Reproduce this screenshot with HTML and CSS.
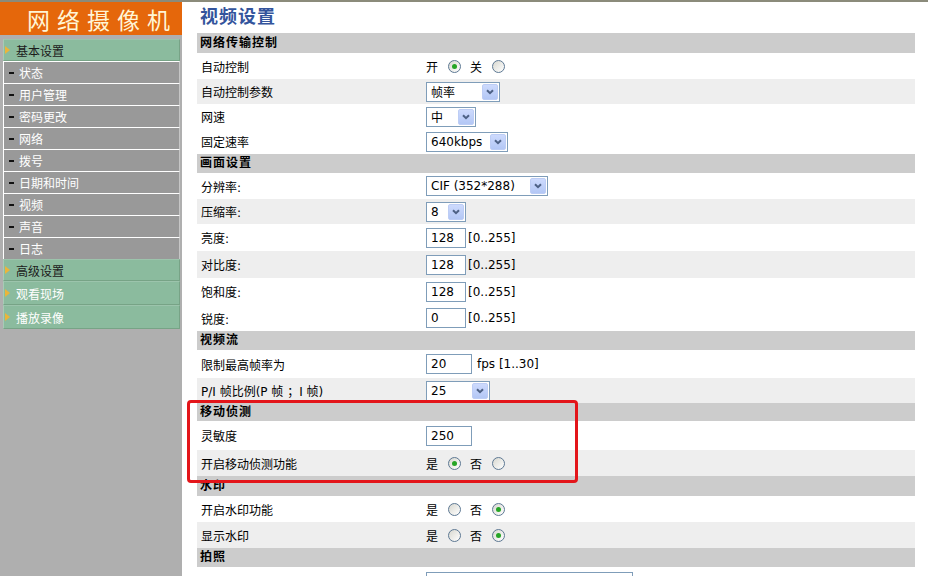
FILE: index.html
```html
<!DOCTYPE html>
<html lang="zh-CN">
<head>
<meta charset="utf-8">
<title>视频设置</title>
<link rel="stylesheet" href="styles.css">
</head>
<body>
<div class="page">
  <aside class="side">
    <div class="brand">网络摄像机</div>
    <nav class="menu">
      <div class="m-main dark"><span class="tri"></span>基本设置</div>
      <div class="m-sub"><span class="dash"></span>状态</div>
      <div class="m-sub"><span class="dash"></span>用户管理</div>
      <div class="m-sub"><span class="dash"></span>密码更改</div>
      <div class="m-sub"><span class="dash"></span>网络</div>
      <div class="m-sub"><span class="dash"></span>拨号</div>
      <div class="m-sub"><span class="dash"></span>日期和时间</div>
      <div class="m-sub"><span class="dash"></span>视频</div>
      <div class="m-sub"><span class="dash"></span>声音</div>
      <div class="m-sub"><span class="dash"></span>日志</div>
      <div class="m-main dark"><span class="tri"></span>高级设置</div>
      <div class="m-main tall"><span class="tri"></span>观看现场</div>
      <div class="m-main tall"><span class="tri"></span>播放录像</div>
    </nav>
  </aside>
  <main class="content">
    <h1 class="title">视频设置</h1>
    <div class="table">
      <div class="sec s20">网络传输控制</div>
      <div class="row r26">
        <div class="lbl">自动控制</div>
        <div class="ctl"><span>开</span><span class="rad on"></span><span>关</span><span class="rad"></span></div>
      </div>
      <div class="row alt">
        <div class="lbl">自动控制参数</div>
        <div class="ctl"><span class="sel w74"><span>帧率</span><span class="sb"><svg width="8" height="6" viewBox="0 0 8 6"><path d="M1 1.2 L4 4.2 L7 1.2" fill="none" stroke="#4d6185" stroke-width="2"/></svg></span></span></div>
      </div>
      <div class="row">
        <div class="lbl">网速</div>
        <div class="ctl"><span class="sel w50"><span>中</span><span class="sb"><svg width="8" height="6" viewBox="0 0 8 6"><path d="M1 1.2 L4 4.2 L7 1.2" fill="none" stroke="#4d6185" stroke-width="2"/></svg></span></span></div>
      </div>
      <div class="row">
        <div class="lbl">固定速率</div>
        <div class="ctl"><span class="sel w82"><span>640kbps</span><span class="sb"><svg width="8" height="6" viewBox="0 0 8 6"><path d="M1 1.2 L4 4.2 L7 1.2" fill="none" stroke="#4d6185" stroke-width="2"/></svg></span></span></div>
      </div>

      <div class="sec">画面设置</div>
      <div class="row r26">
        <div class="lbl">分辨率:</div>
        <div class="ctl"><span class="sel w122"><span>CIF (352*288)</span><span class="sb"><svg width="8" height="6" viewBox="0 0 8 6"><path d="M1 1.2 L4 4.2 L7 1.2" fill="none" stroke="#4d6185" stroke-width="2"/></svg></span></span></div>
      </div>
      <div class="row alt">
        <div class="lbl">压缩率:</div>
        <div class="ctl"><span class="sel w40"><span>8</span><span class="sb"><svg width="8" height="6" viewBox="0 0 8 6"><path d="M1 1.2 L4 4.2 L7 1.2" fill="none" stroke="#4d6185" stroke-width="2"/></svg></span></span></div>
      </div>
      <div class="row r27">
        <div class="lbl">亮度:</div>
        <div class="ctl"><input class="txt w40" value="128" readonly><span class="hint">[0..255]</span></div>
      </div>
      <div class="row r27 alt">
        <div class="lbl">对比度:</div>
        <div class="ctl"><input class="txt w40" value="128" readonly><span class="hint">[0..255]</span></div>
      </div>
      <div class="row r27">
        <div class="lbl">饱和度:</div>
        <div class="ctl"><input class="txt w40" value="128" readonly><span class="hint">[0..255]</span></div>
      </div>
      <div class="row r26">
        <div class="lbl">锐度:</div>
        <div class="ctl"><input class="txt w40" value="0" readonly><span class="hint">[0..255]</span></div>
      </div>

      <div class="sec">视频流</div>
      <div class="row r28">
        <div class="lbl">限制最高帧率为</div>
        <div class="ctl"><input class="txt w46" value="20" readonly><span class="hint fps">fps [1..30]</span></div>
      </div>
      <div class="row alt">
        <div class="lbl">P/I 帧比例(P 帧 ；I 帧)</div>
        <div class="ctl"><span class="sel w64"><span>25</span><span class="sb"><svg width="8" height="6" viewBox="0 0 8 6"><path d="M1 1.2 L4 4.2 L7 1.2" fill="none" stroke="#4d6185" stroke-width="2"/></svg></span></span></div>
      </div>

      <div class="sec s18">移动侦测</div>
      <div class="row r29">
        <div class="lbl">灵敏度</div>
        <div class="ctl"><input class="txt w46" value="250" readonly></div>
      </div>
      <div class="row r26 alt">
        <div class="lbl">开启移动侦测功能</div>
        <div class="ctl"><span>是</span><span class="rad on"></span><span>否</span><span class="rad"></span></div>
      </div>

      <div class="sec s20">水印</div>
      <div class="row r26">
        <div class="lbl">开启水印功能</div>
        <div class="ctl"><span>是</span><span class="rad"></span><span>否</span><span class="rad on"></span></div>
      </div>
      <div class="row r26 alt">
        <div class="lbl">显示水印</div>
        <div class="ctl"><span>是</span><span class="rad"></span><span>否</span><span class="rad on"></span></div>
      </div>

      <div class="sec">拍照</div>
      <div class="row r30">
        <div class="lbl"></div>
        <div class="ctl top"><input class="txt w207" value="" readonly></div>
      </div>
    </div>
    <div class="redbox"></div>
  </main>
</div>
</body>
</html>
```

FILE: styles.css
```css
* { box-sizing: border-box; }

html, body { height: 100%; }

body {
  margin: 0;
  border-top: 2px solid #8b8b7b;
  background: #fff;
  color: #000;
  font: 12px "DejaVu Sans", "Noto Sans CJK SC", sans-serif;
  overflow: hidden;
}

.page {
  display: flex;
  height: 574px;
}

/* ---------- sidebar ---------- */
.side {
  width: 182px;
  flex: none;
  background: #afafaf;
}

.brand {
  height: 33px;
  line-height: 33px;
  background: #e5670b;
  color: #fff5d6;
  font: 23px "Noto Sans CJK SC", sans-serif;
  letter-spacing: 7px;
  padding-left: 27px;
  white-space: nowrap;
}

.menu {
  display: flex;
  flex-direction: column;
  padding: 4px 2px 0 3px;
}

.m-main {
  height: 22px;
  display: flex;
  align-items: center;
  padding-left: 1px;
  background: #8bbb9e;
  border: 1px solid #77a386;
  border-left-color: #a8cbb5;
  border-top-color: #9cc4ac;
  color: #fff;
}
.m-main.dark { color: #1c1c1c; }
.m-main.tall { height: 24px; }

.tri {
  width: 0;
  height: 0;
  border-left: 5px solid #ebb53a;
  border-top: 4px solid transparent;
  border-bottom: 4px solid transparent;
  margin-right: 6px;
}

.m-sub {
  height: 22px;
  display: flex;
  align-items: center;
  padding-left: 5px;
  background: #999;
  border-top: 1px solid #fff;
  border-left: 1px solid #fff;
  border-right: 1px solid #c6c6c6;
  color: #fff;
}

.dash {
  width: 5px;
  height: 2px;
  background: #111;
  margin-right: 5px;
}

/* ---------- content ---------- */
.content {
  flex: 1;
  position: relative;
  padding: 0 13px 0 15px;
}

.title {
  margin: 0;
  height: 31px;
  line-height: 31px;
  padding-left: 3px;
  font: bold 18px "Noto Sans CJK SC", sans-serif;
  letter-spacing: 1px;
  color: #33549c;
}

.sec {
  height: 19px;
  line-height: 19px;
  background: #ccc;
  padding-left: 3px;
  font-weight: bold;
  letter-spacing: 1px;
}
.sec.s20 { height: 20px; line-height: 20px; }
.sec.s18 { height: 18px; line-height: 18px; }

.row {
  display: grid;
  grid-template-columns: 229px 1fr;
  align-items: center;
  height: 25px;
}
.row.alt { background: #eee; }
.r26 { height: 26px; }
.r27 { height: 27px; }
.r28 { height: 28px; }
.r29 { height: 29px; }
.r30 { height: 30px; align-items: start; }

.lbl { padding-left: 4px; white-space: nowrap; }

.ctl {
  display: flex;
  align-items: center;
  white-space: nowrap;
}
.ctl.top { padding-top: 5px; }

/* radio */
.rad {
  position: relative;
  width: 13px;
  height: 13px;
  border-radius: 50%;
  border: 1px solid #5d7893;
  background: linear-gradient(135deg, #d8d8d0, #ffffff);
  margin: 0 9px 0 10px;
}
.rad.on::after {
  content: "";
  position: absolute;
  left: 3px;
  top: 3px;
  width: 5px;
  height: 5px;
  border-radius: 50%;
  background: #25a525;
}

/* select */
.sel {
  display: inline-flex;
  align-items: center;
  justify-content: space-between;
  height: 20px;
  border: 1px solid #7f9db9;
  background: #fff;
  padding-left: 4px;
}
.sb {
  width: 16px;
  height: 16px;
  margin-right: 1px;
  display: flex;
  align-items: center;
  justify-content: center;
  background: linear-gradient(#cddafd, #b3c7f5);
  border: 1px solid #bdcdf5;
  border-radius: 2px;
}
.w40 { width: 40px; }
.w46 { width: 46px; }
.w50 { width: 50px; }
.w64 { width: 64px; }
.w74 { width: 74px; }
.w82 { width: 82px; }
.w122 { width: 122px; }
.w207 { width: 207px; }

/* text input */
.txt {
  height: 20px;
  border: 1px solid #7f9db9;
  padding: 0 4px;
  margin: 0;
  font: inherit;
  color: #000;
  background: #fff;
  outline: none;
}

.hint { margin-left: 2px; }
.hint.fps { margin-left: 5px; }

/* highlight overlay */
.redbox {
  position: absolute;
  left: 5px;
  top: 398px;
  width: 391px;
  height: 83px;
  border: 3px solid #e3151a;
  border-radius: 4px;
  pointer-events: none;
}
```
